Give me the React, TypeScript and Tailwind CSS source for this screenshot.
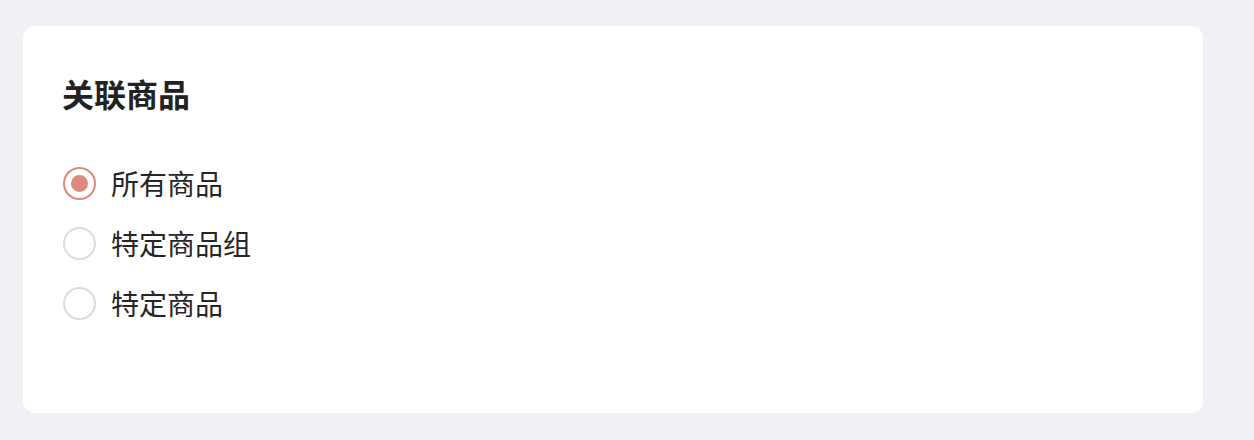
import { useState } from 'react';

const options = ['所有商品', '特定商品组', '特定商品'];

export default function App() {
  const [selected, setSelected] = useState(0);

  return (
    <div
      className="min-h-[440px] bg-[#f0f1f5] pl-[23px] pr-[51px] pt-[26px] pb-[27px]"
      style={{ fontFamily: '"Noto Sans CJK SC", "Noto Sans", sans-serif' }}
    >
      <div className="h-[387px] rounded-[12px] bg-white pl-[40px] pt-[43px]">
        {/* 标题 */}
        <h2 className="-ml-[1px] text-[32px] font-bold leading-[48px] text-[#222]">关联商品</h2>

        {/* 选项 */}
        <div className="mt-[36px] flex flex-col">
          {options.map((label, i) => {
            const active = i === selected;
            return (
              <button
                key={label}
                onClick={() => setSelected(i)}
                className="flex h-[60px] items-center gap-[15px] text-left"
              >
                <span
                  className={
                    active
                      ? 'flex h-[33px] w-[33px] items-center justify-center rounded-full border-2 border-[#e0877f]'
                      : 'flex h-[33px] w-[33px] items-center justify-center rounded-full border-2 border-[#dcdcdc]'
                  }
                >
                  {active && <span className="h-[17px] w-[17px] rounded-full bg-[#e0877f]" />}
                </span>
                <span className="text-[28px] leading-[40px] text-[#262626]">{label}</span>
              </button>
            );
          })}
        </div>
      </div>
    </div>
  );
}
